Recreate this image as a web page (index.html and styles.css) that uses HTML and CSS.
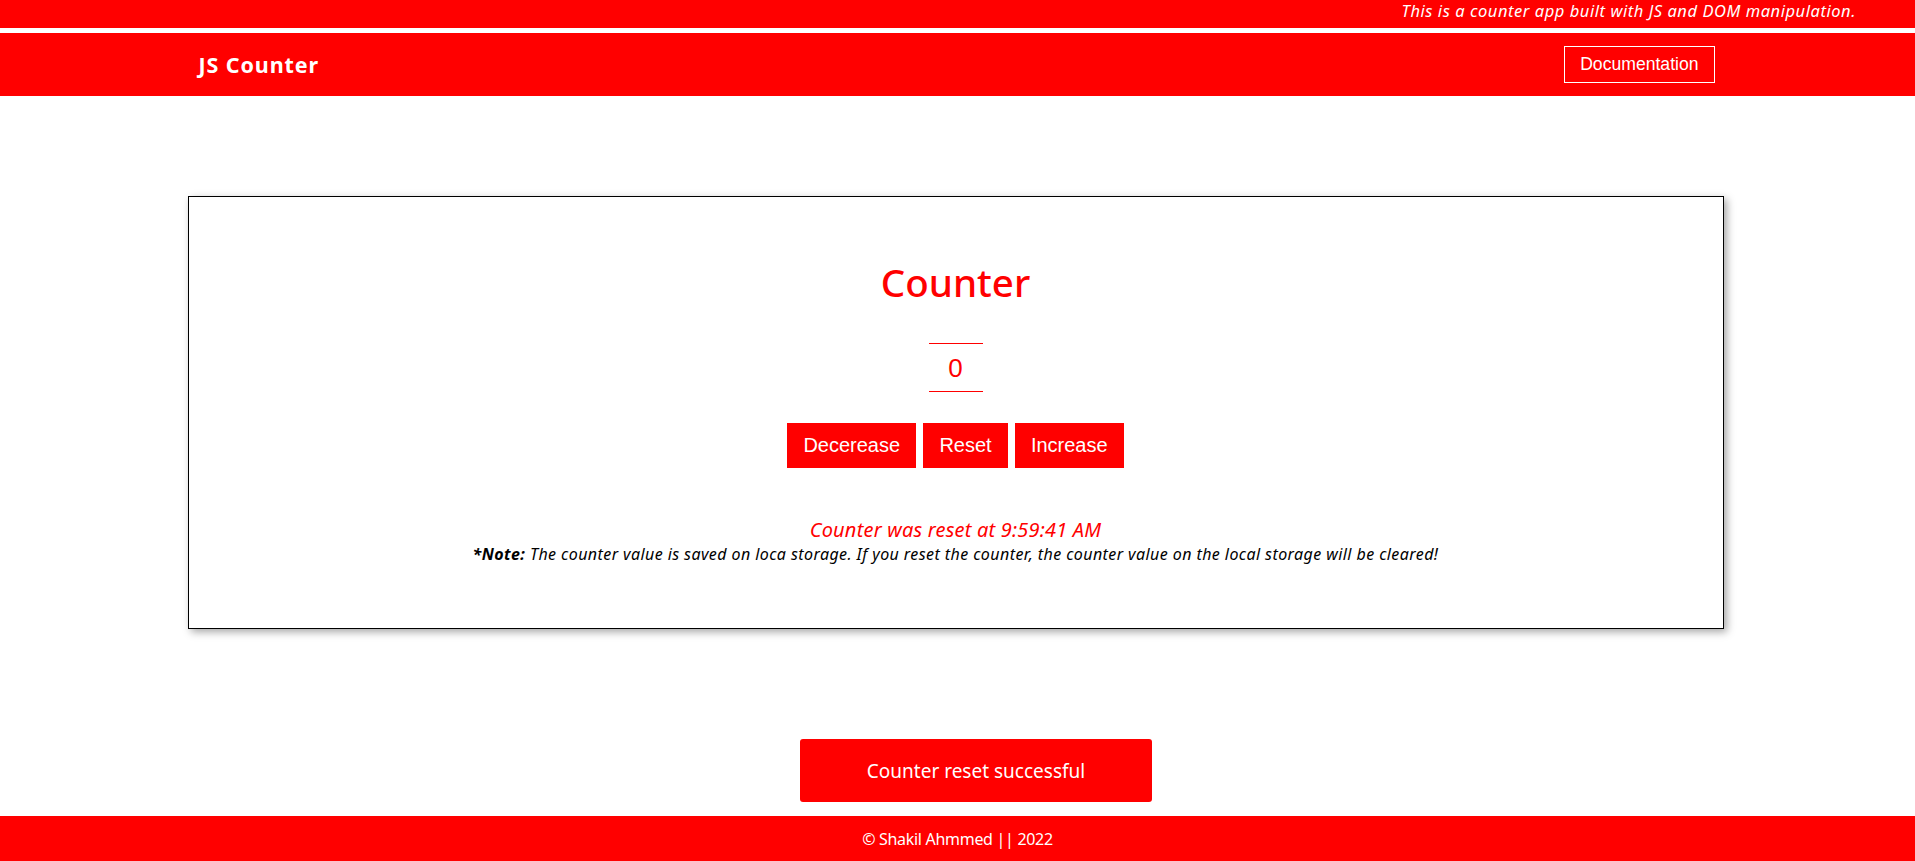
FILE: index.html
```html
<!DOCTYPE html>
<html lang="en">
<head>
<meta charset="utf-8">
<title>JS Counter</title>
<link rel="stylesheet" href="styles.css">
</head>
<body>
<div class="page">
  <div class="topbar"><p class="topbar-text">This is a counter app built with JS and DOM manipulation.</p></div>
  <nav class="nav">
    <div class="nav-inner">
      <a class="brand" href="#">JS Counter</a>
      <a class="doc-btn" href="#">Documentation</a>
    </div>
  </nav>
  <main class="main">
    <section class="card">
      <h1 class="title">Counter</h1>
      <div class="value-wrap"><span class="value">0</span></div>
      <div class="actions">
        <button class="btn">Decerease</button>
        <button class="btn">Reset</button>
        <button class="btn">Increase</button>
      </div>
      <p class="message">Counter was reset at 9:59:41 AM</p>
      <p class="note"><strong>*Note:</strong> The counter value is saved on loca storage. If you reset the counter, the counter value on the local storage will be cleared!</p>
    </section>
  </main>
  <footer class="footer">© Shakil Ahmmed || 2022</footer>
</div>
<div class="toast">Counter reset successful</div>
</body>
</html>
```

FILE: styles.css
```css
* { box-sizing: border-box; }
html, body { margin: 0; padding: 0; }
body {
  font-family: "Noto Sans", "Open Sans", sans-serif;
  color: #000;
  background: #fff;
}
.page {
  min-height: 100vh;
  display: flex;
  flex-direction: column;
}
.topbar {
  background: #ff0000;
  height: 28px;
  margin-bottom: 5px;
  display: flex;
  justify-content: flex-end;
  padding-right: 59px;
}
.topbar-text {
  margin: 0;
  color: #fff;
  font-style: italic;
  font-size: 16.5px;
  letter-spacing: 0.55px;
  line-height: 22px;
}
.nav {
  background: #ff0000;
  height: 63px;
}
.nav-inner {
  width: 1536px;
  margin: 0 auto;
  height: 100%;
  display: flex;
  align-items: center;
  justify-content: space-between;
  padding: 0 11px 0 9px;
}
.brand {
  color: #fff;
  text-decoration: none;
  font-weight: 700;
  font-size: 21.5px;
  letter-spacing: 0.9px;
}
.doc-btn {
  color: #fff;
  text-decoration: none;
  font-family: "Liberation Sans", Arial, sans-serif;
  font-size: 17.6px;
  border: 1px solid #fff;
  height: 37px;
  padding: 0 15px;
  display: flex;
  align-items: center;
}
.main {
  padding: 100px 4px 0 0;
}
.card {
  width: 1536px;
  height: 433px;
  margin: 0 auto;
  border: 1px solid #000;
  box-shadow: 3px 3px 8px rgba(0, 0, 0, 0.35);
  padding-top: 61px;
  display: flex;
  flex-direction: column;
  align-items: center;
}
.title {
  margin: 0;
  color: #ff0000;
  font-size: 38.5px;
  font-weight: 500;
  line-height: 48px;
}
.value-wrap {
  margin-top: 37px;
  width: 54px;
  height: 49px;
  border-top: 1px solid #ff0000;
  border-bottom: 1px solid #ff0000;
  display: flex;
  align-items: center;
  justify-content: center;
}
.value {
  color: #ff0000;
  font-family: "Liberation Sans", Arial, sans-serif;
  font-size: 26px;
  line-height: 1;
}
.actions {
  margin-top: 31px;
  display: flex;
  gap: 6.5px;
}
.btn {
  background: #ff0000;
  color: #fff;
  border: none;
  font-family: "Liberation Sans", Arial, sans-serif;
  font-size: 20px;
  height: 45px;
  padding: 0 16.4px;
  cursor: pointer;
}
.message {
  margin: 50px 0 0;
  color: #ff0000;
  font-style: italic;
  font-size: 20px;
  letter-spacing: 0.2px;
  line-height: 24px;
}
.note {
  margin: 1px 0 0;
  font-style: italic;
  font-size: 16px;
  letter-spacing: 0.42px;
  line-height: 22px;
}
.footer {
  margin-top: auto;
  background: #ff0000;
  color: #fff;
  height: 45px;
  display: flex;
  align-items: center;
  justify-content: center;
  font-size: 16px;
  letter-spacing: -0.3px;
}
.toast {
  position: fixed;
  left: 800px;
  bottom: 59px;
  width: 352px;
  height: 63px;
  background: #ff0000;
  color: #fff;
  border-radius: 3px;
  display: flex;
  align-items: center;
  justify-content: center;
  font-size: 19px;
}
```
